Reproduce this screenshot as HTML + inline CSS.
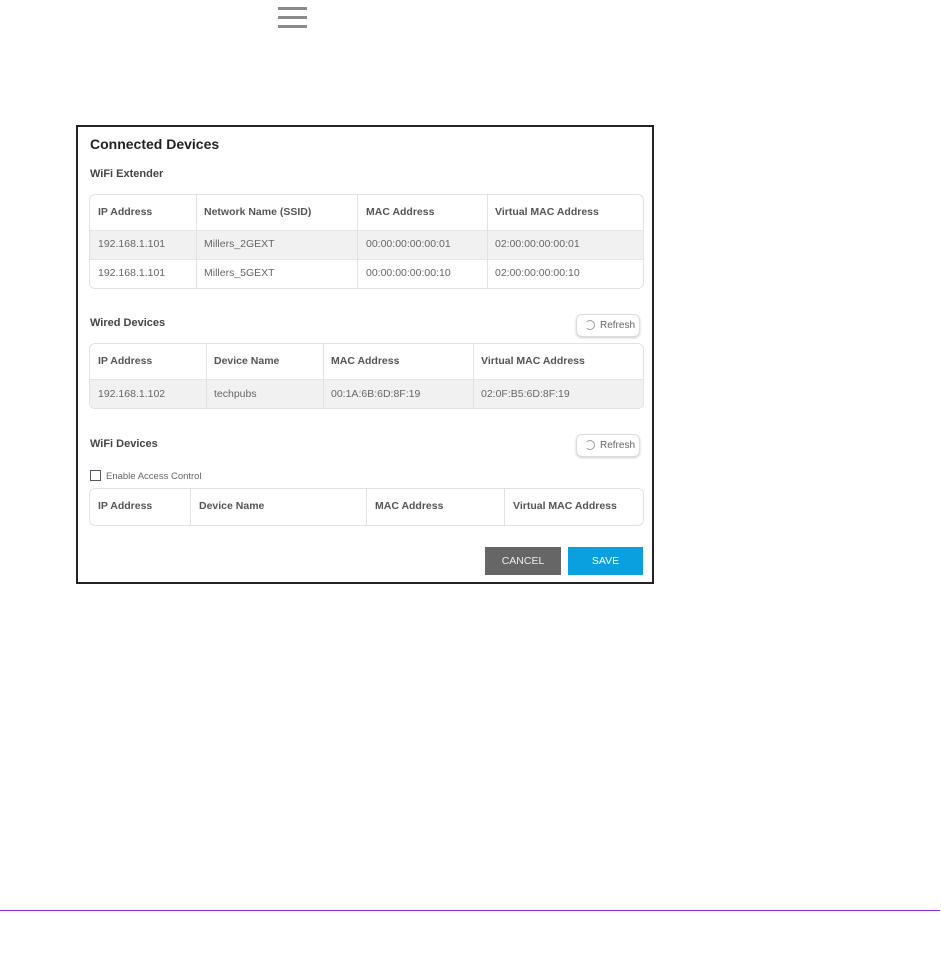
<!DOCTYPE html>
<html><head><meta charset="utf-8"><style>
body{margin:0;width:941px;height:978px;background:#fff;position:relative;font-family:"Liberation Sans",Arial,sans-serif;overflow:hidden}
.a{position:absolute}
.bar{position:absolute;left:278px;width:29px;height:3px;background:#8a8a8a}
.frame{left:76px;top:125px;width:574px;height:455px;border:2px solid #222}
.t{position:absolute;border:1px solid #e2e2e2;border-radius:6px;overflow:hidden;background:#fff}
.r{position:absolute;left:0;right:0;border-top:1px solid #e6e6e6}
.g{background:#f1f1f1}
.c{position:absolute;top:0;bottom:0;border-left:1px solid #e2e2e2}
.tx{position:absolute;font-size:10.5px;color:#666;white-space:nowrap}
.h{font-weight:bold;color:#555;font-size:10.5px}
.lbl{position:absolute;font-size:11px;font-weight:bold;color:#444}
.rf{position:absolute;width:62px;height:21px;border:1px solid #ddd;border-radius:6px;box-shadow:0 1px 2px #ccc;font-size:10px;color:#666;background:#fff}
.rf span{position:absolute;left:23px;top:5px}
.rf i{position:absolute;left:8px;top:5px;width:8px;height:8px;border:1.5px solid #999;border-radius:50%;border-left-color:transparent}
</style></head><body>
<div class="bar" style="top:7px"></div><div class="bar" style="top:16px"></div><div class="bar" style="top:25px"></div>
<div class="a frame"></div>
<div class="a" style="left:90px;top:136px;font-size:14px;font-weight:bold;color:#222">Connected Devices</div>
<div class="lbl" style="left:90px;top:168px">WiFi Extender</div>

<div class="t" style="left:89px;top:194px;width:553px;height:93px">
<div class="r g" style="top:35px;height:29px"></div><div class="r" style="top:64px"></div>
<div class="c" style="left:106px"></div><div class="c" style="left:267px"></div><div class="c" style="left:397px"></div>
</div>
<div class="tx h" style="left:98px;top:206px">IP Address</div><div class="tx h" style="left:204px;top:206px">Network Name (SSID)</div><div class="tx h" style="left:366px;top:206px">MAC Address</div><div class="tx h" style="left:495px;top:206px">Virtual MAC Address</div>
<div class="tx" style="left:98px;top:238px">192.168.1.101</div><div class="tx" style="left:204px;top:238px">Millers_2GEXT</div><div class="tx" style="left:366px;top:238px">00:00:00:00:00:01</div><div class="tx" style="left:495px;top:238px">02:00:00:00:00:01</div>
<div class="tx" style="left:98px;top:267px">192.168.1.101</div><div class="tx" style="left:204px;top:267px">Millers_5GEXT</div><div class="tx" style="left:366px;top:267px">00:00:00:00:00:10</div><div class="tx" style="left:495px;top:267px">02:00:00:00:00:10</div>

<div class="lbl" style="left:90px;top:317px">Wired Devices</div>
<div class="rf" style="left:576px;top:314px"><i></i><span>Refresh</span></div>
<div class="t" style="left:89px;top:343px;width:553px;height:64px">
<div class="r g" style="top:35px;height:29px"></div>
<div class="c" style="left:116px"></div><div class="c" style="left:233px"></div><div class="c" style="left:383px"></div>
</div>
<div class="tx h" style="left:98px;top:355px">IP Address</div><div class="tx h" style="left:214px;top:355px">Device Name</div><div class="tx h" style="left:331px;top:355px">MAC Address</div><div class="tx h" style="left:481px;top:355px">Virtual MAC Address</div>
<div class="tx" style="left:98px;top:388px">192.168.1.102</div><div class="tx" style="left:214px;top:388px">techpubs</div><div class="tx" style="left:331px;top:388px">00:1A:6B:6D:8F:19</div><div class="tx" style="left:481px;top:388px">02:0F:B5:6D:8F:19</div>

<div class="lbl" style="left:90px;top:438px">WiFi Devices</div>
<div class="rf" style="left:576px;top:434px"><i></i><span>Refresh</span></div>
<div class="a" style="left:90px;top:470px;width:9px;height:9px;border:1px solid #556;"></div>
<div class="tx" style="left:106px;top:471px;font-size:9.5px">Enable Access Control</div>
<div class="t" style="left:89px;top:488px;width:553px;height:36px">
<div class="c" style="left:100px"></div><div class="c" style="left:276px"></div><div class="c" style="left:414px"></div>
</div>
<div class="tx h" style="left:98px;top:500px">IP Address</div><div class="tx h" style="left:199px;top:500px">Device Name</div><div class="tx h" style="left:375px;top:500px">MAC Address</div><div class="tx h" style="left:513px;top:500px">Virtual MAC Address</div>

<div class="a" style="left:485px;top:547px;width:76px;height:28px;background:#666;color:#eee;font-size:10.5px;text-align:center;line-height:28px">CANCEL</div>
<div class="a" style="left:568px;top:547px;width:75px;height:28px;background:#0aa0e0;color:#fff;font-size:10.5px;text-align:center;line-height:28px">SAVE</div>

<div class="a" style="left:0;top:910px;width:940px;height:1px;background:#8a2be2"></div>
</body></html>
